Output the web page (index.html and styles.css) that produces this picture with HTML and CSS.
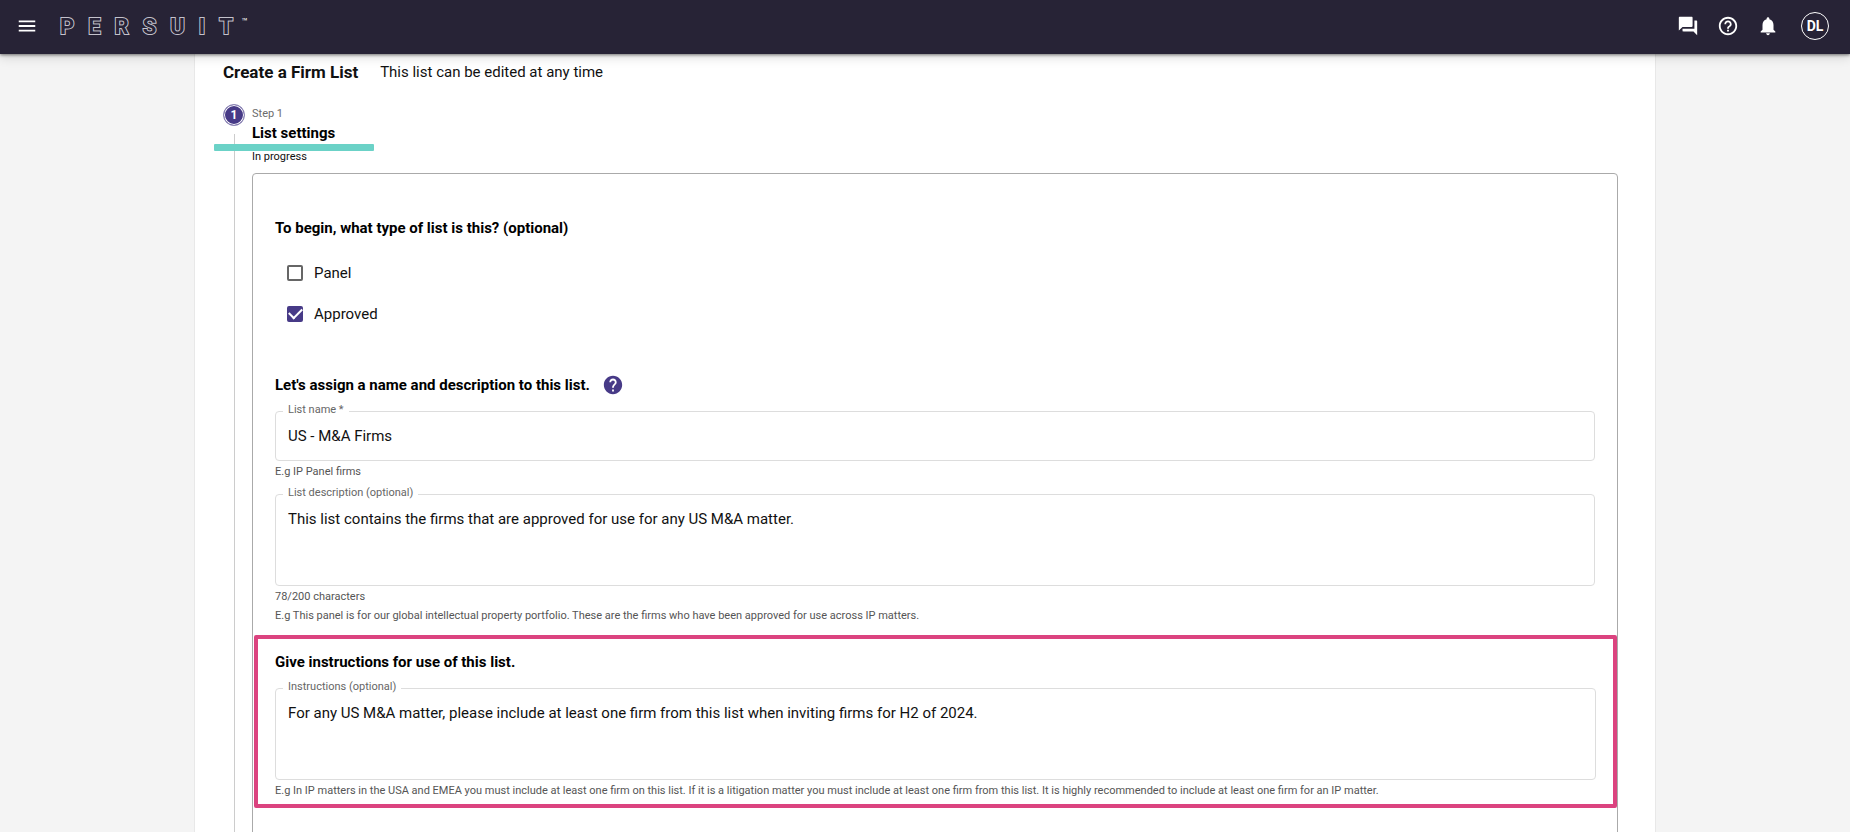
FILE: index.html
```html
<!DOCTYPE html>
<html lang="en">
<head>
    <meta charset="UTF-8">
    <meta name="viewport" content="width=device-width, initial-scale=1.0">
    <title>Create a Firm List</title>
    <link rel="stylesheet" href="styles.css">
</head>
<body>
    <header class="topbar">
        <button class="icon-button" type="button" aria-label="Menu">
            <svg viewBox="0 0 24 24"><path d="M3 18h18v-2H3v2zm0-5h18v-2H3v2zm0-7v2h18V6H3z"/></svg>
        </button>
        <div class="logo">
            <span>P</span><span>E</span><span>R</span><span>S</span><span>U</span><span>I</span><span>T</span>
            <small>™</small>
        </div>
        <nav class="actions">
            <button class="icon-button" type="button" aria-label="Messages">
                <svg viewBox="0 0 24 24"><path d="M21 6h-2v9H6v2c0 .55.45 1 1 1h11l4 4V7c0-.55-.45-1-1-1zm-4 6V3c0-.55-.45-1-1-1H3c-.55 0-1 .45-1 1v14l4-4h10c.55 0 1-.45 1-1z"/></svg>
            </button>
            <button class="icon-button" type="button" aria-label="Help">
                <svg viewBox="0 0 24 24"><path d="M11 18h2v-2h-2v2zm1-16C6.480 2 2 6.480 2 12s4.480 10 10 10 10-4.480 10-10S17.520 2 12 2zm0 18c-4.410 0-8-3.590-8-8s3.590-8 8-8 8 3.590 8 8-3.590 8-8 8zm0-14c-2.210 0-4 1.790-4 4h2c0-1.100.9-2 2-2s2 .9 2 2c0 2-3 1.750-3 5h2c0-2.250 3-2.500 3-5 0-2.210-1.790-4-4-4z"/></svg>
            </button>
            <button class="icon-button" type="button" aria-label="Notifications">
                <svg viewBox="0 0 24 24"><path d="M12 22c1.100 0 2-.9 2-2h-4c0 1.100.89 2 2 2zm6-6v-5c0-3.070-1.640-5.640-4.500-6.320V4c0-.83-.67-1.500-1.500-1.500s-1.500.67-1.500 1.500v.68C7.630 5.360 6 7.920 6 11v5l-2 2v1h16v-1l-2-2z"/></svg>
            </button>
            <button class="avatar" type="button">DL</button>
        </nav>
    </header>

    <main class="content">
        <div class="paper">
            <div class="page-title">
                <h1>Create a Firm List</h1>
                <p>This list can be edited at any time</p>
            </div>

            <div class="step">
                <div class="step-rail">
                    <span class="step-number">1</span>
                </div>
                <div class="step-body">
                    <p class="step-label">Step 1</p>
                    <h2 class="step-title">List settings</h2>
                    <p class="step-status">In progress</p>

                    <form class="card">
                        <section class="section">
                            <h3>To begin, what type of list is this? (optional)</h3>
                            <div class="options">
                                <label class="option"><input type="checkbox"> Panel</label>
                                <label class="option"><input type="checkbox" checked> Approved</label>
                            </div>
                        </section>

                        <section class="section">
                            <h3>
                                Let's assign a name and description to this list.
                                <svg class="hint" viewBox="0 0 24 24"><path d="M12 2C6.480 2 2 6.480 2 12s4.480 10 10 10 10-4.480 10-10S17.520 2 12 2zm1 17h-2v-2h2v2zm2.070-7.750l-.9.920C13.450 12.900 13 13.500 13 15h-2v-.5c0-1.100.45-2.100 1.170-2.830l1.240-1.260c.37-.36.59-.86.59-1.410 0-1.100-.9-2-2-2s-2 .9-2 2H8c0-2.210 1.790-4 4-4s4 1.790 4 4c0 .88-.36 1.680-.93 2.250z"/></svg>
                            </h3>
                            <div class="field">
                                <label for="list-name">List name *</label>
                                <input type="text" id="list-name" value="US - M&amp;A Firms">
                            </div>
                            <p class="helper">E.g IP Panel firms</p>
                            <div class="field">
                                <label for="list-description">List description (optional)</label>
                                <textarea id="list-description">This list contains the firms that are approved for use for any US M&amp;A matter.</textarea>
                            </div>
                            <p class="helper">78/200 characters</p>
                            <p class="helper">E.g This panel is for our global intellectual property portfolio. These are the firms who have been approved for use across IP matters.</p>
                        </section>

                        <section class="section highlighted">
                            <h3>Give instructions for use of this list.</h3>
                            <div class="field">
                                <label for="instructions">Instructions (optional)</label>
                                <textarea id="instructions">For any US M&amp;A matter, please include at least one firm from this list when inviting firms for H2 of 2024.</textarea>
                            </div>
                            <p class="helper">E.g In IP matters in the USA and EMEA you must include at least one firm on this list. If it is a litigation matter you must include at least one firm from this list. It is highly recommended to include at least one firm for an IP matter.</p>
                        </section>
                    </form>
                </div>
                <span class="underline"></span>
            </div>
        </div>
    </main>
</body>
</html>
```

FILE: styles.css
```css
* {
    margin: 0;
    padding: 0;
    box-sizing: border-box;
}

body {
    display: flex;
    flex-direction: column;
    height: 100vh;
    font-family: Roboto, "Liberation Sans", sans-serif;
    font-size: 15px;
    line-height: 20px;
    color: #111;
    background-color: #f4f4f4;
}

button {
    border: none;
    background: none;
    color: white;
    font-family: inherit;
    cursor: pointer;
}

/* top bar */
.topbar {
    position: relative;
    z-index: 1;
    display: flex;
    flex-shrink: 0;
    align-items: center;
    height: 54px;
    padding: 0 21px 2px 16px;
    background-color: #272336;
    color: white;
    box-shadow: 0 1px 3px rgba(0, 0, 0, 0.5), 0 4px 10px rgba(0, 0, 0, 0.12);
}

.icon-button {
    width: 22px;
    height: 22px;
}

.icon-button svg {
    display: block;
    fill: white;
}

.logo {
    display: flex;
    gap: 14px;
    margin-left: 22px;
    padding-top: 2px;
    font-size: 22px;
    font-weight: 700;
    line-height: 28px;
    color: #272336;
    -webkit-text-stroke: 2px #c4c2cc;
    paint-order: stroke fill;
}

.logo small {
    margin-left: -5px;
    font-size: 10px;
    font-weight: 400;
    line-height: 18px;
    color: white;
    -webkit-text-stroke: 0;
}

.actions {
    display: flex;
    align-items: center;
    gap: 18px;
    margin-left: auto;
}

.avatar {
    width: 28px;
    height: 28px;
    margin-left: 4px;
    border: 1px solid white;
    border-radius: 50%;
    font-size: 14px;
    font-weight: 700;
}

/* page */
.content {
    flex: 1;
    overflow-y: auto;
    scrollbar-width: none;
}

.paper {
    max-width: 1462px;
    margin: 0 auto;
    padding: 8px 37px 40px 28px;
    border: 1px solid #e8e8e8;
    border-top: none;
    background-color: white;
}

.page-title {
    display: flex;
    gap: 22px;
}

h1 {
    font-size: 17px;
    font-weight: 700;
    line-height: 20px;
}

h2,
h3 {
    font-size: 15px;
    font-weight: 700;
    line-height: 20px;
    color: black;
}

/* stepper */
.step {
    position: relative;
    display: flex;
    gap: 7px;
    margin-top: 22px;
}

.step-rail {
    display: flex;
    flex-direction: column;
    align-items: center;
    gap: 8px;
    width: 22px;
}

.step-rail::after {
    content: "";
    flex: 1;
    width: 1px;
    background-color: #ccc;
}

.step-number {
    width: 22px;
    height: 22px;
    border: 1px solid #8f88b8;
    border-radius: 50%;
    background-color: #473a87;
    box-shadow: inset 0 0 0 1px white;
    color: white;
    font-size: 12px;
    font-weight: 700;
    line-height: 20px;
    text-align: center;
}

.step-body {
    flex: 1;
    padding-top: 2px;
}

.step-label {
    font-size: 11px;
    line-height: 16px;
    color: #6b6b6b;
}

.step-title {
    line-height: 22px;
}

.step-status {
    margin-top: 5px;
    font-size: 11px;
    line-height: 16px;
}

.underline {
    position: absolute;
    top: 40px;
    left: -9px;
    width: 160px;
    height: 7px;
    border-radius: 1px;
    background-color: #6bd2c7;
}

/* form */
.card {
    margin-top: 8px;
    padding: 44px 0 60px;
    border: 1px solid #aaa;
    border-radius: 4px;
}

.section {
    padding: 0 22px;
}

.section + .section {
    margin-top: 41px;
}

.section h3 {
    display: flex;
    align-items: center;
    gap: 12px;
    height: 20px;
}

.hint {
    width: 22px;
    height: 22px;
    fill: #473a87;
}

.options {
    margin-top: 14px;
    padding-left: 12px;
}

.option {
    display: flex;
    align-items: center;
    gap: 11px;
    height: 41px;
}

.option input {
    appearance: none;
    display: grid;
    place-items: center;
    width: 16px;
    height: 16px;
    border: 2px solid #666;
    border-radius: 2px;
}

.option input:checked {
    border-color: #473a87;
    background-color: #473a87;
}

.option input:checked::before {
    content: "";
    width: 11px;
    height: 6px;
    border: solid white;
    border-width: 0 0 2px 2px;
    transform: translateY(-2px) rotate(-45deg);
}

.field {
    position: relative;
    margin-top: 16px;
}

.field label {
    position: absolute;
    top: -9px;
    left: 8px;
    padding: 0 5px;
    background-color: white;
    font-size: 11px;
    line-height: 16px;
    color: #666;
}

.field input,
.field textarea {
    display: block;
    width: 100%;
    height: 50px;
    padding: 0 12px;
    border: 1px solid #ddd;
    border-radius: 4px;
    background: none;
    color: #111;
    font: inherit;
    resize: none;
}

.field textarea {
    height: 92px;
    padding-top: 14px;
}

.helper {
    font-size: 11px;
    line-height: 19px;
    color: #555;
}

.field + .helper {
    margin-top: 1px;
}

.helper + .field {
    margin-top: 13px;
}

.section.highlighted {
    margin-top: 10px;
    margin-left: 1px;
    padding: 13px 17px 4px;
    border: 4px solid #db437f;
    border-radius: 2px;
}
```
